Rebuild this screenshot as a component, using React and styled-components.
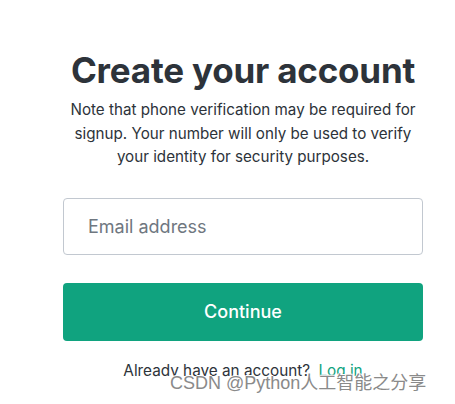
import styled, { createGlobalStyle } from 'styled-components'

const GlobalStyle = createGlobalStyle`
    html, body {
        margin: 0;
        padding: 0;
        background: #fff;
    }
    body {
        font-family: Inter, "Noto Sans", sans-serif;
        color: #2d333a;
    }
`

const Page = styled.div`
    position: relative;
    width: 455px;
    height: 404px;
    overflow: hidden;
    background: #fff;
`

const Card = styled.main`
    width: 360px;
    margin-left: 63px;
    padding-top: 48px;
    display: flex;
    flex-direction: column;
    align-items: center;
    text-align: center;
`

const Title = styled.h1`
    margin: 0;
    font-size: 35px;
    line-height: 44px;
    font-weight: 700;
    letter-spacing: -0.2px;
    color: #2d333a;
    white-space: nowrap;
`

const Note = styled.p`
    margin: 6px 0 0;
    font-size: 15.2px;
    line-height: 23.5px;
    color: #2d333a;
`

const Field = styled.input`
    box-sizing: border-box;
    width: 360px;
    height: 57px;
    margin-top: 29px;
    padding: 0 24px;
    border: 1px solid #c2c8d0;
    border-radius: 4px;
    font-family: Inter, "Noto Sans", sans-serif;
    font-size: 18px;
    color: #2d333a;
    outline: none;

    &::placeholder {
        color: #6f7780;
    }
`

const Button = styled.button`
    width: 360px;
    height: 58px;
    margin-top: 28px;
    border: none;
    border-radius: 4px;
    background: #10a37f;
    color: #fff;
    font-family: Inter, "Noto Sans", sans-serif;
    font-size: 18px;
    font-weight: 500;
    cursor: pointer;
`

const Footer = styled.p`
    margin: 20px 0 0;
    font-size: 15.3px;
    line-height: 20px;
    color: #2d333a;

    a {
        color: #10a37f;
        text-decoration: none;
        margin-left: 4px;
    }
`

const Watermark = styled.span`
    position: absolute;
    left: 170px;
    top: 372px;
    font-family: "Liberation Sans", "Noto Sans CJK SC", sans-serif;
    font-size: 18px;
    line-height: 22px;
    color: #8a8a8a;
    text-shadow: -1px 0 #fff, 1px 0 #fff, 0 -1px #fff, 0 1px #fff;
    white-space: nowrap;
    pointer-events: none;
`

const App = () => {
    return (
        <Page>
            <GlobalStyle />
            <Card>
                <Title>Create your account</Title>
                <Note>
                    Note that phone verification may be required for signup. Your number
                    will only be used to verify your identity for security purposes.
                </Note>
                <Field type="email" placeholder="Email address" />
                <Button>Continue</Button>
                <Footer>
                    Already have an account? <a href="#">Log in</a>
                </Footer>
            </Card>
            <Watermark>CSDN @Python人工智能之分享</Watermark>
        </Page>
    )
}

export default App
